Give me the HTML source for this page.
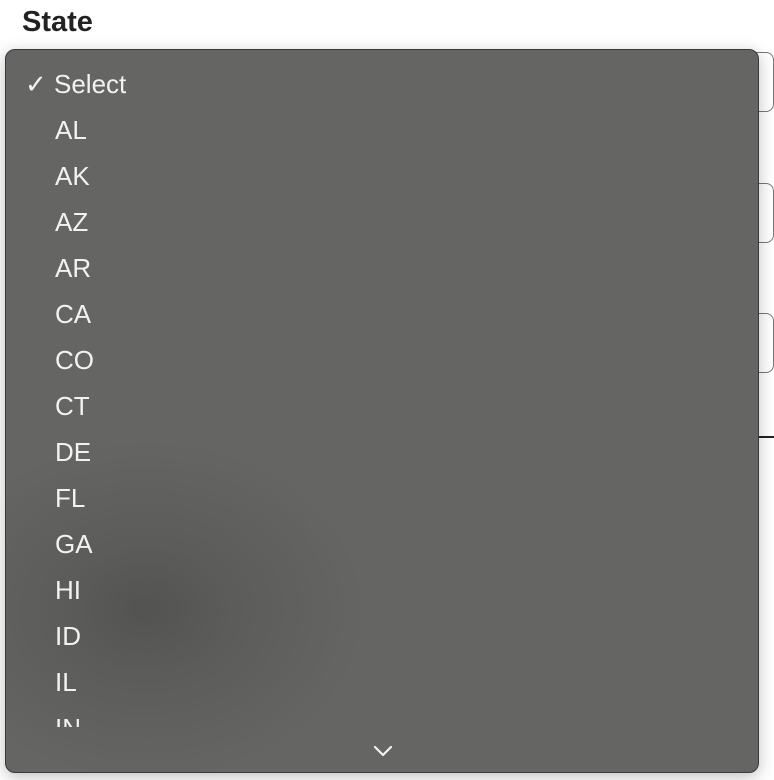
<!DOCTYPE html>
<html><head><meta charset="utf-8"><style>
html,body{margin:0;padding:0;width:774px;height:780px;background:#fff;overflow:hidden;position:relative;font-family:"Liberation Sans",Arial,sans-serif}
.lbl{position:absolute;left:22px;top:6px;font-size:29px;font-weight:bold;color:#222}
.box{position:absolute;left:740px;width:32px;height:58px;border:1.5px solid #777;border-radius:8px;background:#fff}
.line{position:absolute;left:740px;width:40px;top:436px;height:2px;background:#222}
.menu{position:absolute;left:5px;top:49px;width:752px;height:722px;border-radius:10px;
background:radial-gradient(ellipse 220px 170px at 140px 560px,#535352 0%,#5c5c5b 40%,rgba(100,100,98,0) 100%),#656563;
border:1px solid #3a3a3a;box-shadow:0 4px 16px rgba(0,0,0,.25);overflow:hidden}
.it{position:absolute;left:49px;font-size:26px;color:#f2f2f2;line-height:30px}
.clip{position:absolute;left:0;top:0;width:100%;height:677px;overflow:hidden}
</style></head><body>
<div class="lbl">State</div>
<div class="box" style="top:52px"></div>
<div class="box" style="top:183px"></div>
<div class="box" style="top:313px"></div>
<div class="line"></div>
<div class="menu">
<div class="clip">
<div class="it" style="left:19px;top:19px">✓ Select</div>
<div class="it" style="top:65px">AL</div>
<div class="it" style="top:111px">AK</div>
<div class="it" style="top:157px">AZ</div>
<div class="it" style="top:203px">AR</div>
<div class="it" style="top:249px">CA</div>
<div class="it" style="top:295px">CO</div>
<div class="it" style="top:341px">CT</div>
<div class="it" style="top:387px">DE</div>
<div class="it" style="top:433px">FL</div>
<div class="it" style="top:479px">GA</div>
<div class="it" style="top:525px">HI</div>
<div class="it" style="top:571px">ID</div>
<div class="it" style="top:617px">IL</div>
<div class="it" style="top:663px">IN</div>
</div>
<svg style="position:absolute;left:366px;top:694px" width="22" height="14" viewBox="0 0 22 14"><path d="M3 3 L11 11 L19 3" fill="none" stroke="#f2f2f2" stroke-width="2.2" stroke-linecap="round" stroke-linejoin="round"/></svg>
</div>
</body></html>
